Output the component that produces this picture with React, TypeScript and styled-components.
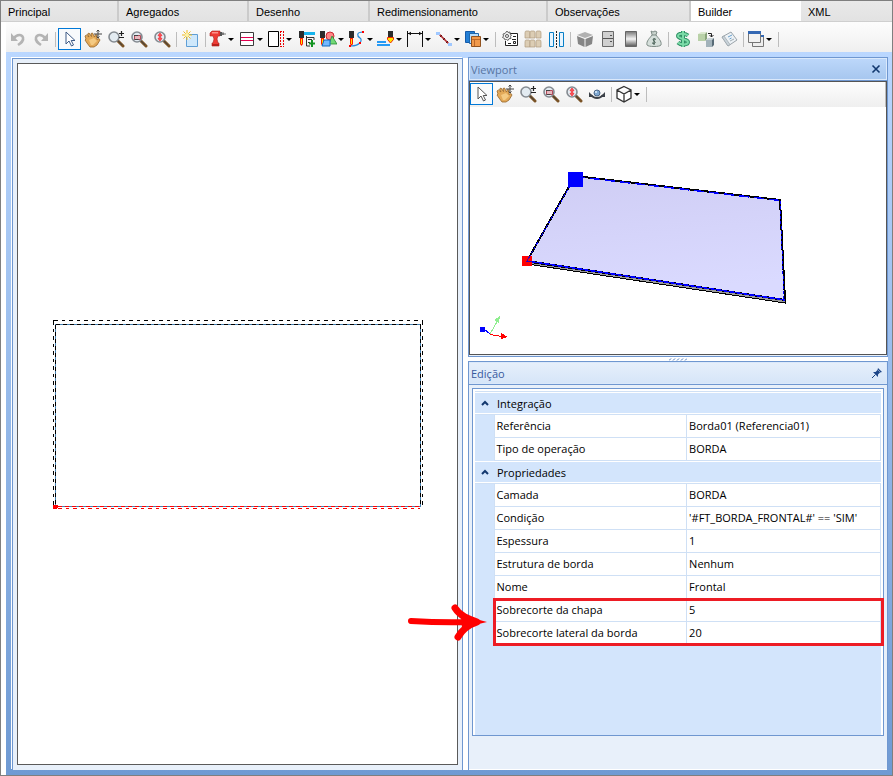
import React from "react";
import styled, { createGlobalStyle } from "styled-components";

const GlobalStyle = createGlobalStyle`
  * { box-sizing: border-box; }
  body { margin: 0; background: #fff; color: #000; font-family: "Liberation Sans", Arial, sans-serif; font-size: 11px; }
  button { font: inherit; color: inherit; background: none; border: 0; padding: 0; margin: 0; }
  svg { display: block; }
`;

const uiFont = `"Open Sans", "Noto Sans", sans-serif`;

/* ---------- frame ---------- */

const Window = styled.div`
  min-height: 100vh;
  display: flex;
  flex-direction: column;
  border: 1px solid #7f7f7f;
`;

const TabBar = styled.div`
  display: grid;
  grid-template-columns: 118fr 130fr 121fr 178fr 143fr 110fr 91fr;
  height: 21px;
  border-bottom: 1px solid #cfcfcf;
`;

const Tab = styled.button<{ $active?: boolean; $last?: boolean }>`
  padding: 2px 6px 0 7px;
  text-align: left;
  white-space: nowrap;
  background: ${(p) => (p.$active ? "#fff" : "linear-gradient(#e9e9e9, #e2e2e2)")};
  border-right: ${(p) => (p.$last || p.$active ? "0" : "2px solid #cbcbcb")};
`;

const Body = styled.div`
  flex: 1;
  display: flex;
  flex-direction: column;
  margin-left: 5px;
`;

const ToolStrip = styled.div<{ $inner?: boolean }>`
  display: flex;
  align-items: center;
  flex: none;
  height: ${(p) => (p.$inner ? 25 : 30)}px;
  padding-top: ${(p) => (p.$inner ? 0 : 4)}px;
  padding-bottom: ${(p) => (p.$inner ? 1 : 0)}px;
  background: linear-gradient(#fdfdfd, #efefef);
  border-right: ${(p) => (p.$inner ? "1px solid #bdbdbd" : "0")};
`;

const ToolButton = styled.button<{ $active?: boolean; $menu?: boolean }>`
  display: flex;
  flex: none;
  align-items: center;
  justify-content: ${(p) => (p.$menu ? "flex-start" : "center")};
  gap: 1px;
  width: ${(p) => (p.$menu ? 29 : 23)}px;
  height: 22px;
  padding-left: ${(p) => (p.$menu ? 1 : 0)}px;
  border: ${(p) => (p.$active ? "1px solid #0078d7" : "0")};
  background: ${(p) => (p.$active ? "#f8fafc" : "none")};
`;

const MenuArrow = styled.span`
  border: solid transparent;
  border-width: 3px 3px 0;
  border-top-color: #000;
`;

const Separator = styled.span`
  flex: none;
  width: 1px;
  height: 15px;
  margin: 0 2px 0 3px;
  background: #bdbdbd;
`;

const Workspace = styled.div`
  flex: 1;
  display: grid;
  grid-template-columns: minmax(0, 451fr) minmax(0, 420fr);
  gap: 5px;
  padding: 5px 4px 5px 6px;
  background: linear-gradient(#bad7ff, #6f9ad3);
`;

const panelEdge = "#6f97d0";

const DrawingPanel = styled.section`
  display: flex;
  margin-top: 1px;
  padding: 4px 4px 5px;
  background: #e8f0fa;
  border: 1px solid ${panelEdge};
  border-bottom: 0;
  box-shadow: -1px -1px 0 #fff, 5px 0 0 #fff;
`;

const DrawingCanvas = styled.div`
  flex: 1;
  min-width: 0;
  display: flex;
  align-items: center;
  justify-content: center;
  background: #fff;
  border: 1px solid #5a5a5a;
`;

const RightColumn = styled.div`
  display: flex;
  flex-direction: column;
`;

const Panel = styled.section<{ $grow?: boolean }>`
  flex: ${(p) => (p.$grow ? "1" : "none")};
  display: flex;
  flex-direction: column;
  background: #e8f0fa;
  border: 1px solid ${panelEdge};
  border-bottom-width: ${(p) => (p.$grow ? 0 : 1)}px;
`;

const PanelTitle = styled.header<{ $blue?: boolean }>`
  flex: none;
  display: flex;
  align-items: center;
  justify-content: space-between;
  height: 22px;
  padding: 0 3px 0 1px;
  font-family: ${uiFont};
  border: 1px solid #dbe9fb;
  color: ${(p) => (p.$blue ? "#5875a3" : "#38599d")};
  background: ${(p) => (p.$blue ? "linear-gradient(#bcd7fa, #a7c7ef)" : "linear-gradient(#e6effb, #d6e5f8)")};
  box-shadow: 0 1px 0 ${panelEdge};
`;

const TitleText = styled.h2`
  margin: 0;
  font-size: 11px;
  font-weight: 400;
`;

const ViewBody = styled.div`
  height: 274px;
  display: flex;
  flex-direction: column;
  margin: 1px 0;
  background: #fff;
  border: 1px solid #555;
`;

const Scene = styled.svg`
  flex: 1;
  min-height: 0;
  width: 100%;
`;

const Splitter = styled.div`
  display: flex;
  flex: none;
  align-items: center;
  justify-content: center;
  height: 4px;
  background: #fff;
`;

const GridArea = styled.div`
  flex: 1;
  display: flex;
  margin-top: 1px;
  padding: 3px;
  padding-bottom: 33px;
  border-bottom: 1px solid #fff;
`;

const GridFrame = styled.div`
  position: relative;
  flex: 1;
  padding: 2px;
  background: #d3e5fc;
  border: 1px solid ${panelEdge};
  box-shadow: inset 2px 0 0 #fff, inset -2px 0 0 #fff, inset 0 2px 0 #fff;
`;

/* ---------- property table ---------- */

const PropertyTable = styled.table`
  width: 100%;
  table-layout: fixed;
  border-collapse: collapse;
  border-top: 1px solid #cfe0f5;
  font-family: ${uiFont};
  font-size: 11px;
`;

const GutterCol = styled.col`
  width: 19px;
`;

const NameCol = styled.col`
  width: 47.5%;
`;

const Row = styled.tr`
  height: 23px;
`;

const Gutter = styled.td`
  padding: 0;
  background: #d3e5fc;
`;

const GroupHead = styled.th`
  padding: 0;
  text-align: left;
  font-weight: 400;
  background: #d3e5fc;
  border-bottom: 1px solid #cfe0f5;
  box-shadow: inset 0 1px 0 #fff, inset 0 -1px 0 #fff;
`;

const GroupButton = styled.button`
  display: flex;
  align-items: center;
  gap: 8px;
  width: 100%;
  height: 22px;
  padding-left: 6px;
  font-family: ${uiFont};
`;

const NameCell = styled.th`
  padding: 0 2px;
  text-align: left;
  font-weight: 400;
  line-height: 16px;
  white-space: nowrap;
  background: #fff;
  border: 1px solid #cfe0f5;
`;

const ValueCell = styled.td`
  padding: 0 2px;
  line-height: 16px;
  white-space: nowrap;
  background: #fff;
  border: 1px solid #cfe0f5;
`;

const Highlight = styled.div`
  position: absolute;
  left: 20px;
  right: -1px;
  top: 209px;
  height: 48px;
  border: 3px solid #ed1c24;
  pointer-events: none;
`;

const Pointer = styled.svg`
  position: absolute;
  left: -66px;
  top: 214px;
  pointer-events: none;
`;

/* ---------- icons ---------- */

const lens = (
  <>
    <path d="M11 11l5 5" stroke="#7a5326" strokeWidth="3" strokeLinecap="round" />
    <path d="M10 10l5 5" stroke="#444" strokeWidth="1" />
    <circle cx="7" cy="7" r="5" fill="#e3ebf1" stroke="#858b91" strokeWidth="1.6" />
  </>
);

const pen = (
  <>
    <path d="M1 1h5v7H1z" fill="#2c2c2c" />
    <path d="M2 8h3v6l-1.500 2L2 14z" fill="#ff1d00" />
    <path d="M3 9h1v5H3z" fill="#ffe600" />
  </>
);

const bag = (x: number, y: number) => (
  <path key={`${x}-${y}`} d={`M${x} ${y + 2}q0-2 1-2h3q1 0 1 2v5H${x}z`} fill="#dccdb4" stroke="#b09c7e" strokeWidth=".7" />
);

const glyphs: Record<string, React.ReactNode> = {
  undo: (
    <>
      <path d="M5 8C8 4 13 4 14 7.500S12 13 9 15" stroke="#b4b4b4" strokeWidth="2.600" />
      <path d="M2 3v8h7z" fill="#b4b4b4" />
    </>
  ),
  redo: (
    <>
      <path d="M13 8C10 4 5 4 4 7.500S6 13 9 15" stroke="#b4b4b4" strokeWidth="2.600" />
      <path d="M16 3v8H9z" fill="#b4b4b4" />
    </>
  ),
  select: <path d="M5 2v12l3-3 2.500 5 2-1-2.300-4.500H14z" fill="#fff" stroke="#3d5a86" strokeWidth="1" />,
  selectGray: <path d="M5 2v12l3-3 2.500 5 2-1-2.300-4.500H14z" fill="#fff" stroke="#555" strokeWidth="1" />,
  hand: (
    <>
      <path d="M1 6l1.500-1L5 7 3.500 4 5 3l2.500 3.500L7 3.500l1.500-.5L10.500 7l1-2.500 1.500.5v4.500l2-1L16 10l-3 5-3 2H6l-3-4-2-3 1-1z" fill="#e3a958" stroke="#94652a" strokeWidth=".8" />
      <path d="M5 10l5-2 3 3-4 4H7z" fill="#f4ca83" />
      <path d="M14 0v8M10 4h8M12.500 1.500L14 0l1.500 1.500M12.500 6.500L14 8l1.500-1.500" stroke="#444" fill="none" />
    </>
  ),
  zoom: <>{lens}<path d="M12 3.500h5M14.500 1v5M12 7.500h5" stroke="#222" strokeWidth="1.200" /></>,
  zoomWindow: <>{lens}<path d="M4.500 5.500h6v4h-6z" fill="#e8b7bd" stroke="#b04a58" /><path d="M4 5.500h4M4.500 9.500h4" stroke="#444" /></>,
  zoomHeight: <>{lens}<path d="M7 3L5 5.500h1.200v3H5L7 11l2-2.500H7.800v-3H9z" fill="#ff555b" stroke="#ef2930" strokeWidth=".7" /></>,
  create: (
    <>
      <path d="M4.500 4.500h11v12h-11z" fill="#eaf5ff" stroke="#5f9fd6" />
      <path d="M10 5h5v11H5v-5z" fill="#cfe8fb" />
      <path d="M5 0v10M0 5h10M1.500 1.500l7 7M8.500 1.500l-7 7" stroke="#f0b91f" strokeWidth="1" />
      <circle cx="5" cy="5" r="2" fill="#fff3a3" />
    </>
  ),
  drill: (
    <>
      <path d="M1 3l2-2h8v5H9L8 9l1 4h1v3H3v-3h1l1-4-1-3H1z" fill="#ee3b34" stroke="#a91f1c" strokeWidth=".6" />
      <path d="M3 2h6v1.500H3z" fill="#ff9188" />
      <path d="M11 2h2v4h-2z" fill="#555" />
      <path d="M13 2.500h2v2.500h-2zM15 3.500h2v1h-2z" fill="#777" />
      <path d="M3 14h7v2H3z" fill="#b9211c" />
    </>
  ),
  rows: <><path d="M2.500 2.500h13v13h-13z" fill="#fff" stroke="#3b3b3b" /><path d="M3 7.500h12M3 10.500h12" stroke="#e40050" /></>,
  edge: (
    <>
      <path d="M1.500 1.500h10v15h-10z" fill="#fff" stroke="#000" />
      <path d="M13.500 1v16M16.500 1v16M13 1.500h4M13 16.500h4" stroke="#e90000" strokeDasharray="2 1" fill="none" />
    </>
  ),
  penList: (
    <>
      {pen}
      <path d="M6 2h11v3H6z" fill="#17b4ed" />
      <path d="M8.500 6v10H12M9 7.500h7V10M10 9.500h4M10 12.500h2" fill="none" stroke="#333" />
      <path d="M14 10v7M11 13.500h6" stroke="#129321" strokeWidth="2" />
    </>
  ),
  penShapes: (
    <>
      {pen}
      <circle cx="11" cy="6" r="4" fill="#ff8585" stroke="#cb2830" />
      <path d="M13 6l5 8h-8z" fill="#72d976" stroke="#248b31" strokeWidth=".8" />
      <path d="M5 10h6v6H3z" fill="#73b9ff" stroke="#1469bd" />
    </>
  ),
  penCurve: (
    <>
      {pen}
      <path d="M15 2C8 2 9 6 12 8s0 8-9 8" fill="none" stroke="#248cde" strokeWidth="1.200" />
      <path d="M14 1h2v2h-2zM11 12h2v2h-2zM1 15h2v2H1z" fill="#f00" />
    </>
  ),
  penFill: (
    <>
      <path d="M0 11h9v2H0zM0 14h13v2H0z" fill="#269af5" />
      <path d="M11 1h5v6h-5z" fill="#2c2c2c" />
      <path d="M10.500 7.500h6v2l-3 3.500-3-3.500z" fill="#ffe600" stroke="#ef2a00" />
    </>
  ),
  dimension: (
    <>
      <path d="M1.500 1v16M16.500 1v16M2 3.500h14" stroke="#111" />
      <path d="M2 3.500L5 1.800v3.400zM16 3.500l-3-1.700v3.400z" fill="#111" />
    </>
  ),
  line: (
    <>
      <path d="M4 4l10 10" stroke="#b0282c" strokeWidth="1.600" />
      <path d="M5 7l2-2M8 10l2-2M11 13l2-2" stroke="#5b1519" />
      <path d="M1 2h4v3H1zM13 13h4v3h-4z" fill="#a0c8ff" />
    </>
  ),
  layers: (
    <>
      <path d="M1.500 1.500h9v11h-9z" fill="#247fd5" stroke="#145baa" />
      <path d="M5.500 3.500h9v10h-9z" fill="#b8dfff" stroke="#1d67ad" />
      <path d="M7.500 6.500h9v10h-9z" fill="#f0994b" stroke="#91521f" />
      <path d="M8 9.500h8M10.500 9.500V16" stroke="#bb682b" />
    </>
  ),
  gear: (
    <>
      <path d="M8 3.500h8.500v12h-12V11" fill="#fff" stroke="#222" />
      <path d="M12 6.500h3M11 9.500h4M7 13.500h3M12.500 11.500h2v2h-2z" stroke="#222" fill="none" />
      <path d="M6 1l1 1.500 2-.5v2l1.500 1L9.500 6.500l.5 2-2 .2L7 10.500 5.500 9.500 4 10 3.500 8.500l-2-1L2.500 6 2 4l2-.5z" fill="#f0f0f0" stroke="#666" />
      <circle cx="6" cy="6" r="1.500" fill="#fff" stroke="#555" />
    </>
  ),
  bags: <>{[1, 6, 12].map((x) => [bag(x, 1), bag(x, 10)])}</>,
  mirror: (
    <>
      <path d="M2.500 2.500h4v14h-4zM12.500 2.500h4v14h-4z" fill="#e7f5ff" stroke="#087fc7" />
      <path d="M9.500 1v17" stroke="#222" strokeDasharray="2 1" />
    </>
  ),
  box: (
    <>
      <path d="M1 5l8-3 8 3-8 3z" fill="#b1b1b1" />
      <path d="M1 6l7.500 3v8L2 14zM17 6L9.500 9v8l6.500-3z" fill="#858585" />
    </>
  ),
  fridge: <><path d="M3.500 1.500h11v15h-11z" fill="#d0d0d0" stroke="#6a6a6a" /><path d="M4 8.500h10M11 5.500h2M11 11.500h2" stroke="#555" /></>,
  cylinder: (
    <>
      <defs><linearGradient id="steel" x2="0" y2="1"><stop stopColor="#777" /><stop offset=".5" stopColor="#f4f4f4" /><stop offset="1" stopColor="#555" /></linearGradient></defs>
      <path d="M3.500 1.500h11v15h-11z" fill="url(#steel)" stroke="#666" />
    </>
  ),
  money: (
    <>
      <path d="M6 1l2 1 2-1 2 1-1.500 4h-3z" fill="#cad4ce" stroke="#7d8b86" />
      <path d="M7 5h4c2 3 6 6 5 10-1 2-13 2-14 0C1 11 5 8 7 5z" fill="#d5dfdb" stroke="#7d8b86" />
      <path d="M11 9.500C9 8 7 9.500 9 11s1.500 3-2 2M9 8v7" fill="none" stroke="#40594f" />
    </>
  ),
  dollar: (
    <>
      <path d="M14 5.500C11 3 4 3 4 6s10 3 10 6-7 3.500-10 .5M9 1v16" fill="none" stroke="#2f9165" strokeWidth="4" />
      <path d="M14 5.500C11 3 4 3 4 6s10 3 10 6-7 3.500-10 .5M9 1v16" fill="none" stroke="#7bdba8" strokeWidth="2" />
    </>
  ),
  boxes: (
    <>
      <path d="M1 4l3-2h6L8 4z" fill="#dbe8cf" /><path d="M1 4h7v7H1z" fill="#b9d1a8" /><path d="M8 4l2-2v7l-2 2z" fill="#8aa47c" />
      <path d="M9 10l2-2h6l-2 2z" fill="#c7d2d6" /><path d="M9 10h6v7H9z" fill="#a2b2ba" /><path d="M15 10l2-2v7l-2 2z" fill="#576a76" />
      <path d="M11 3.500h3.500V7M12.500 5l2 2 2-2" fill="none" stroke="#222" />
    </>
  ),
  sheet: (
    <>
      <path d="M2 7l9-5 6 8-9 6z" fill="#edf2f6" stroke="#9aa3a9" />
      <path d="M2 7l2-1 6 8.500-2 1.500z" fill="#c9d3da" stroke="#9ba5ab" strokeWidth=".7" />
      <path d="M8 7l4-2M9.500 9l2-1" stroke="#69a0cc" />
      <path d="M10 11l4-2" stroke="#a3aeb5" />
    </>
  ),
  windows: (
    <>
      <path d="M5.500 5.500h11v11h-11z" fill="#eee" stroke="#777" />
      <path d="M1.500 1.500h12v11h-12z" fill="#f2f2f2" stroke="#777" />
      <path d="M1 1h13v3H1zM14 5h3v2h-3z" fill="#3468b3" />
    </>
  ),
  orbit: (
    <>
      <path d="M3 10c3 4 9 4 12 0" fill="none" stroke="#3c4148" strokeWidth="2" />
      <path d="M1 7v5h5zM17 7v5h-5z" fill="#3c4148" />
      <circle cx="9" cy="8" r="3" fill="#80a9d3" stroke="#4c6889" /><circle cx="8" cy="7" r="1" fill="#e1f2ff" />
    </>
  ),
  cube: <path d="M9 1.500l7 3.500v8L9 17l-7-4V5zM2 5l7 4 7-4M9 9v8" fill="#fff" stroke="#333" strokeWidth="1.300" />,
};

const Icon = ({ name }: { name: string }) => (
  <svg width="18" height="18" viewBox="0 0 18 18" fill="none" aria-hidden="true">
    {glyphs[name]}
  </svg>
);

type Tool = { icon: string; label: string; menu?: boolean; active?: boolean } | "sep";

const mainTools: Tool[] = [
  { icon: "undo", label: "Desfazer" },
  { icon: "redo", label: "Refazer" },
  "sep",
  { icon: "select", label: "Selecionar", active: true },
  { icon: "hand", label: "Mover" },
  { icon: "zoom", label: "Zoom" },
  { icon: "zoomWindow", label: "Zoom janela" },
  { icon: "zoomHeight", label: "Zoom total" },
  "sep",
  { icon: "create", label: "Novo" },
  "sep",
  { icon: "drill", label: "Furo", menu: true },
  { icon: "rows", label: "Rasgo", menu: true },
  { icon: "edge", label: "Borda", menu: true },
  { icon: "penList", label: "Adicionar usinagem" },
  { icon: "penShapes", label: "Formas", menu: true },
  { icon: "penCurve", label: "Curva", menu: true },
  { icon: "penFill", label: "Rebaixo", menu: true },
  { icon: "dimension", label: "Cota", menu: true },
  { icon: "line", label: "Linha", menu: true },
  { icon: "layers", label: "Camadas", menu: true },
  "sep",
  { icon: "gear", label: "Configurar" },
  { icon: "bags", label: "Componentes" },
  { icon: "mirror", label: "Espelhar" },
  "sep",
  { icon: "box", label: "Caixa" },
  { icon: "fridge", label: "Porta" },
  { icon: "cylinder", label: "Painel" },
  { icon: "money", label: "Custo" },
  "sep",
  { icon: "dollar", label: "Preço" },
  { icon: "boxes", label: "Substituir" },
  { icon: "sheet", label: "Lista" },
  "sep",
  { icon: "windows", label: "Janelas", menu: true },
  "sep",
];

const viewTools: Tool[] = [
  { icon: "selectGray", label: "Selecionar", active: true },
  { icon: "hand", label: "Mover" },
  { icon: "zoom", label: "Zoom" },
  { icon: "zoomWindow", label: "Zoom janela" },
  { icon: "zoomHeight", label: "Zoom total" },
  { icon: "orbit", label: "Orbitar" },
  "sep",
  { icon: "cube", label: "Vista", menu: true },
  "sep",
];

const Tools = ({ items }: { items: Tool[] }) => (
  <>
    {items.map((t, i) =>
      t === "sep" ? (
        <Separator key={i} />
      ) : (
        <ToolButton key={i} type="button" aria-label={t.label} $active={t.active} $menu={t.menu}>
          <Icon name={t.icon} />
          {t.menu && <MenuArrow />}
        </ToolButton>
      ),
    )}
  </>
);

/* ---------- data ---------- */

const tabs = ["Principal", "Agregados", "Desenho", "Redimensionamento", "Observações", "Builder", "XML"];

const groups = [
  { title: "Integração", rows: [["Referência", "Borda01 (Referencia01)"], ["Tipo de operação", "BORDA"]] },
  {
    title: "Propriedades",
    rows: [
      ["Camada", "BORDA"],
      ["Condição", "'#FT_BORDA_FRONTAL#' == 'SIM'"],
      ["Espessura", "1"],
      ["Estrutura de borda", "Nenhum"],
      ["Nome", "Frontal"],
      ["Sobrecorte da chapa", "5"],
      ["Sobrecorte lateral da borda", "20"],
    ],
  },
];

/* ---------- drawings ---------- */

const PlanDrawing = () => (
  <svg width="371" height="190" viewBox="52 318 371 190" fill="none" shapeRendering="crispEdges" role="img" aria-label="Planta da peça">
    <path d="M55.500 323.500H420.500V505.500H55.500z" stroke="#4580b0" />
    <path d="M55.500 323.500H420.500M55.500 323.500V505.500M420.500 323.500V505.500" stroke="#000" strokeDasharray="4 3" />
    <path d="M53.500 319.500H422.500M53.500 319.500V507.500M422.500 319.500V507.500" stroke="#000" strokeDasharray="4 4 3 4" />
    <path d="M53.500 319V324M422.500 319V324" stroke="#000" />
    <path d="M58 505.500H420" stroke="#f00" strokeDasharray="4 3" />
    <path d="M58 507.500H420" stroke="#f00" strokeDasharray="4 4 3 4" />
    <path d="M53 504h5v3h-1v1h-4z" fill="#f00" />
  </svg>
);

const ViewportScene = () => (
  <Scene viewBox="470 107 416 247" fill="none" shapeRendering="crispEdges" role="img" aria-label="Vista 3D da peça">
    <defs>
      <linearGradient id="slab" x2="0.2" y2="1">
        <stop stopColor="#cfcdf4" />
        <stop offset="1" stopColor="#dadaff" />
      </linearGradient>
    </defs>
    <path d="M527 262L785 300v3L527 264z" fill="#999" stroke="#000" />
    <path d="M575 176L780 200L785 300L527 261z" fill="url(#slab)" />
    <path d="M575 176L780 200L785 300L527 261z" stroke="#000" strokeWidth="2" />
    <path d="M575 176.500L780 200.500" stroke="#00f" strokeWidth="1.500" strokeDasharray="10 5" />
    <path d="M780 201L784 300M575 177L527 261" stroke="#00f" strokeDasharray="3 2" />
    <path d="M527 261L785 300" stroke="#00f" strokeWidth="1.500" />
    <path d="M785.500 290v13" stroke="#000" />
    <path d="M568 172h15v15h-15z" fill="#00f" />
    <path d="M522 256h10v10h-10z" fill="#f00" />
    <path d="M526 261l6 1M530 256l-3 5" stroke="#30b" />
    <path d="M490 334l8-14" stroke="#90ee90" />
    <path d="M500 316l-6 4 5 3z" fill="#90ee90" />
    <path d="M490 334l-6-5" stroke="#00f" />
    <path d="M480 327h5v5h-5z" fill="#00f" />
    <path d="M490 334.500l12 2" stroke="#f00" />
    <path d="M508 337l-7-4v6z" fill="#f00" />
  </Scene>
);

const Chevron = () => (
  <svg width="8" height="6" viewBox="0 0 8 6" fill="none" aria-hidden="true">
    <path d="M1 5l3-3 3 3" stroke="#13386f" strokeWidth="2" />
  </svg>
);

export default function App() {
  return (
    <>
      <GlobalStyle />
      <Window>
        <TabBar role="tablist">
          {tabs.map((t, i) => (
            <Tab key={t} type="button" role="tab" aria-selected={t === "Builder"} $active={t === "Builder"} $last={i === tabs.length - 1}>
              {t}
            </Tab>
          ))}
        </TabBar>
        <Body>
          <ToolStrip role="toolbar">
            <Tools items={mainTools} />
          </ToolStrip>
          <Workspace>
            <DrawingPanel>
              <DrawingCanvas>
                <PlanDrawing />
              </DrawingCanvas>
            </DrawingPanel>
            <RightColumn>
              <Panel>
                <PanelTitle $blue>
                  <TitleText>Viewport</TitleText>
                  <button type="button" aria-label="Fechar">
                    <svg width="14" height="12" viewBox="0 0 14 12" fill="none">
                      <path d="M3.500 2.500l7 7M10.500 2.500l-7 7" stroke="#12386f" strokeWidth="1.600" />
                    </svg>
                  </button>
                </PanelTitle>
                <ViewBody>
                  <ToolStrip $inner role="toolbar">
                    <Tools items={viewTools} />
                  </ToolStrip>
                  <ViewportScene />
                </ViewBody>
              </Panel>
              <Splitter>
                <svg width="18" height="3" viewBox="0 0 18 3" aria-hidden="true">
                  <path d="M0 2.500l2-2M4 2.500l2-2M8 2.500l2-2M12 2.500l2-2M16 2.500l2-2" stroke="#4777bd" />
                </svg>
              </Splitter>
              <Panel $grow>
                <PanelTitle>
                  <TitleText>Edição</TitleText>
                  <button type="button" aria-label="Fixar painel">
                    <svg width="12" height="12" viewBox="0 0 12 12" fill="none">
                      <path d="M1 11l3.500-3.500" stroke="#16407e" />
                      <path d="M7 1l4 4-2 .5L7 7.500 7 10 2 5l2.500 0L6.500 3z" fill="#1c4587" />
                      <path d="M7.500 3.500l1 1" stroke="#dce8f8" />
                    </svg>
                  </button>
                </PanelTitle>
                <GridArea>
                  <GridFrame>
                    <PropertyTable>
                      <colgroup>
                        <GutterCol />
                        <NameCol />
                        <col />
                      </colgroup>
                      {groups.map((g) => (
                        <tbody key={g.title}>
                          <Row>
                            <GroupHead colSpan={3} scope="rowgroup">
                              <GroupButton type="button" aria-expanded="true">
                                <Chevron />
                                {g.title}
                              </GroupButton>
                            </GroupHead>
                          </Row>
                          {g.rows.map(([name, value]) => (
                            <Row key={name}>
                              <Gutter />
                              <NameCell scope="row">{name}</NameCell>
                              <ValueCell>{value}</ValueCell>
                            </Row>
                          ))}
                        </tbody>
                      ))}
                    </PropertyTable>
                    <Highlight />
                    <Pointer width="80" height="38" viewBox="0 0 80 38" fill="none" aria-hidden="true">
                      <path d="M4 18Q36 20 64 19" stroke="#f00" strokeWidth="6" strokeLinecap="round" />
                      <path d="M48 5c5 8 13 11 22 14-9 3-15 8-19 15" stroke="#f00" strokeWidth="7" strokeLinecap="round" strokeLinejoin="round" />
                      <path d="M54 12l26 7-25 6z" fill="#f00" />
                    </Pointer>
                  </GridFrame>
                </GridArea>
              </Panel>
            </RightColumn>
          </Workspace>
        </Body>
      </Window>
    </>
  );
}
